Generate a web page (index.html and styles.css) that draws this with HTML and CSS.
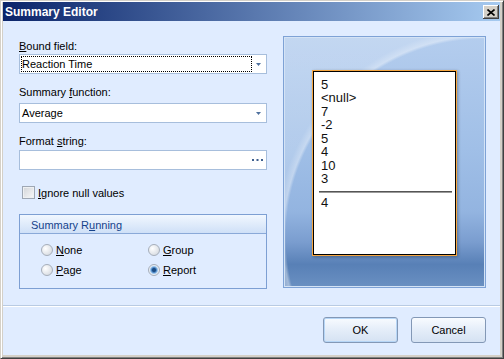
FILE: index.html
```html
<!DOCTYPE html>
<html lang="en">
<head>
<title>Summary Editor</title>
<link rel="stylesheet" href="styles.css">
</head>
<body>
<div class="window">
  <div class="titlebar">
    <span class="title">Summary Editor</span>
    <span class="close">
      <svg width="8" height="7" viewBox="0 0 8 7"><path d="M0.5 0.5L7.5 6.5M7.5 0.5L0.5 6.5" stroke="#000" stroke-width="1.6" fill="none"/></svg>
    </span>
  </div>
  <div class="client">
    <div class="main">
      <div class="fields">
        <div class="label"><u>B</u>ound field:</div>
        <div class="combo combo-bound">
          <span class="value focus">Reaction Time</span>
          <span class="arrow"><svg width="5" height="3" viewBox="0 0 5 3"><polygon points="0,0 5,0 2.5,3" fill="#4f719e"/></svg></span>
        </div>

        <div class="label label-func">Summary <u>f</u>unction:</div>
        <div class="combo combo-func">
          <span class="value">Average</span>
          <span class="arrow"><svg width="5" height="3" viewBox="0 0 5 3"><polygon points="0,0 5,0 2.5,3" fill="#4f719e"/></svg></span>
        </div>

        <div class="label label-format">Format <u>s</u>tring:</div>
        <div class="combo combo-format">
          <span class="value"></span>
          <span class="dots"><svg width="11" height="2" viewBox="0 0 11 2"><rect x="0" y="0" width="2" height="2" fill="#3e5f8e"/><rect x="4.5" y="0" width="2" height="2" fill="#3e5f8e"/><rect x="9" y="0" width="2" height="2" fill="#3e5f8e"/></svg></span>
        </div>

        <div class="check-row">
          <span class="checkbox"></span>
          <span><u>I</u>gnore null values</span>
        </div>

        <div class="group">
          <div class="group-head">Summary R<u>u</u>nning</div>
          <div class="group-body">
            <div class="radio-row"><span class="radio"></span><span><u>N</u>one</span></div>
            <div class="radio-row"><span class="radio"></span><span><u>G</u>roup</span></div>
            <div class="radio-row"><span class="radio"></span><span><u>P</u>age</span></div>
            <div class="radio-row"><span class="radio checked"></span><span><u>R</u>eport</span></div>
          </div>
        </div>
      </div>

      <div class="preview">
        <div class="paper">
          <div class="line">5</div>
          <div class="line">&lt;null&gt;</div>
          <div class="line">7</div>
          <div class="line">-2</div>
          <div class="line">5</div>
          <div class="line">4</div>
          <div class="line">10</div>
          <div class="line">3</div>
          <div class="rule"></div>
          <div class="line">4</div>
        </div>
      </div>
    </div>

    <div class="footer">
      <button class="btn btn-default">OK</button>
      <button class="btn">Cancel</button>
    </div>
  </div>
</div>
</body>
</html>
```

FILE: styles.css
```css
body {
    margin: 0;
    font: 11px "Liberation Sans", Arial, sans-serif;
    color: #000;
}

/* window frame */
.window {
    width: 504px;
    height: 359px;
    box-sizing: border-box;
    background: #d4d0c8;
    border: 1px solid;
    border-color: #d4d0c8 #404040 #404040 #d4d0c8;
    box-shadow: inset 1px 1px #fff, inset -1px -1px #808080;
    padding: 1px 3px 3px 2px;
    display: flex;
    flex-direction: column;
}
.titlebar {
    height: 19px;
    flex: none;
    display: flex;
    align-items: center;
    padding-left: 2px;
    background: linear-gradient(to right, #0a246a, #a6caf0);
    color: #fff;
    font-weight: bold;
    font-size: 12px;
}
.close {
    margin-left: auto;
    margin-right: 1px;
    align-self: flex-start;
    margin-top: 3px;
    width: 16px;
    height: 14px;
    box-sizing: border-box;
    background: #d4d0c8;
    box-shadow: inset -1px -1px #404040, inset 1px 1px #fff, inset -2px -2px #808080;
    display: flex;
    align-items: center;
    justify-content: center;
}

.client {
    flex: 1;
    background: #e0ecff;
    display: flex;
    flex-direction: column;
}
.main {
    height: 284px;
    flex: none;
    display: flex;
    gap: 16px;
    padding: 0 14px 0 16px;
    box-sizing: border-box;
}

/* left column */
.fields {
    width: 248px;
    padding-top: 19px;
}
.label {
    height: 13px;
    line-height: 13px;
}
.label-func { margin-top: 12px; }
.label-format { margin-top: 12px; }
.combo {
    height: 20px;
    box-sizing: border-box;
    border: 1px solid #a7bedc;
    background: #fff;
    display: flex;
    align-items: center;
    padding-left: 1px;
}
.combo-bound { margin-top: 1px; }
.combo-func { margin-top: 4px; }
.combo-format { margin-top: 2px; }
.value {
    width: 231px;
    height: 16px;
    box-sizing: border-box;
    border: 1px solid transparent;
    line-height: 14px;
    padding-left: 0;
    flex: none;
}
.focus { border: 1px dotted #000; }
.arrow {
    flex: 1;
    display: flex;
    justify-content: center;
    padding-right: 1px;
}
.arrow svg, .dots svg { display: block; }
.dots {
    flex: 1;
    display: flex;
    justify-content: flex-end;
    padding-right: 3px;
}

.check-row {
    margin-top: 16px;
    height: 13px;
    display: flex;
    align-items: center;
}
.checkbox {
    width: 13px;
    height: 13px;
    box-sizing: border-box;
    margin: 0 3px 0 3px;
    border: 1px solid #9ea7b4;
    background: linear-gradient(135deg, #d2d4d8, #f8f9fa);
    box-shadow: inset 0 0 0 1px #eef0f2;
}

.group {
    margin-top: 15px;
    height: 75px;
    box-sizing: border-box;
    border: 1px solid #7d9fd3;
}
.group-head {
    height: 16px;
    line-height: 16px;
    padding: 2px 0 0 11px;
    border-bottom: 1px solid #8aa9d8;
    background: linear-gradient(#f1f7ff, #cfe0f7);
    color: #15428b;
}
.group-body {
    display: grid;
    grid-template-columns: 107px 1fr;
    grid-auto-rows: 13px;
    row-gap: 7px;
    padding: 9px 0 0 21px;
}
.radio-row {
    display: flex;
    align-items: center;
    gap: 3px;
}
.radio {
    width: 12px;
    height: 12px;
    box-sizing: border-box;
    border-radius: 50%;
    border: 1px solid #a6aeba;
    background: radial-gradient(circle at 35% 35%, #ffffff, #d8dce2 80%);
}
.radio.checked {
    background: radial-gradient(circle, #1c4c84 0 1.5px, #4d88c6 2.5px, #9cc4ea 3.5px, #e9eef4 4.5px);
}

/* preview panel */
.preview {
    width: 203px;
    height: 252px;
    margin-top: 15px;
    box-sizing: border-box;
    border: 1px solid #7ea2d6;
    box-shadow: inset 0 0 0 1px #d4e3f5;
    padding-top: 33px;
    background:
        radial-gradient(circle 200px at 200px 200px, transparent 198px, rgba(255,255,255,0.4) 201px, rgba(255,255,255,0.2) 208px),
        linear-gradient(#b4cdee, #a0bfe7 45%, #93b4e0 70%, #7a9dcf 82%, #5880b6 91%, #6a90c2 100%);
}
.paper {
    width: 145px;
    height: 186px;
    margin: 0 auto;
    box-sizing: border-box;
    border: 1px solid #f5a640;
    box-shadow: inset 0 0 0 1px #000, 1px 1px 3px rgba(0,0,0,0.3);
    background: #fff;
    padding: 7px 4px 0 8px;
    font-size: 13px;
    color: #111;
}
.line {
    height: 13.43px;
    line-height: 13.43px;
}
.rule {
    margin: 6px 0 3px -2px;
    border-top: 1px solid #555;
    border-bottom: 1px solid #9a9a9a;
}

/* buttons */
.footer {
    flex: 1;
    border-top: 1px solid #b9cbe3;
    box-shadow: inset 0 1px #fff;
    display: flex;
    justify-content: flex-end;
    align-items: flex-start;
    gap: 13px;
    padding: 11px 14px 0 0;
}
.btn {
    width: 75px;
    height: 26px;
    border: 1px solid #8398b6;
    border-radius: 3px;
    background: linear-gradient(#f8fbff, #e4edf9 50%, #d5e2f3);
    font: 11px "Liberation Sans", Arial, sans-serif;
    color: #000;
    padding: 0;
}
.btn-default {
    box-shadow: inset 0 0 0 1px #b6d6f7;
}
```
